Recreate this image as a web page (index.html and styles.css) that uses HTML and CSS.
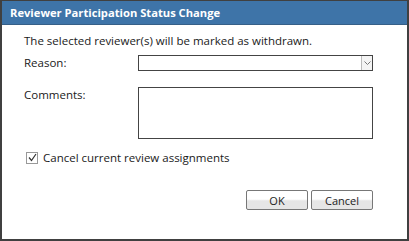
FILE: index.html
```html
<!DOCTYPE html>
<html>
<head>
  <title>Reviewer Participation Status Change</title>
  <link rel="stylesheet" href="styles.css">
</head>
<body>
  <div class="dialog">
    <div class="title-bar">Reviewer Participation Status Change</div>
    <div class="dialog-body">
      <p class="message">The selected reviewer(s) will be marked as withdrawn.</p>
      <div class="form-row">
        <label class="field-label">Reason:</label>
        <div class="select-box">
          <span class="select-arrow">
            <svg width="7" height="5" viewBox="0 0 7 5"><path d="M0.5 0.5 L3.5 3.5 L6.5 0.5" fill="none" stroke="#777" stroke-width="1"/></svg>
          </span>
        </div>
      </div>
      <div class="form-row comments-row">
        <label class="field-label">Comments:</label>
        <div class="textarea-box"></div>
      </div>
      <div class="check-row">
        <span class="checkbox">
          <svg width="9" height="9" viewBox="0 0 9 9"><path d="M1 4.5 L3.5 7.5 L8 1" fill="none" stroke="#333" stroke-width="1.2"/></svg>
        </span>
        <span class="check-label">Cancel current review assignments</span>
      </div>
      <div class="button-row">
        <button class="btn">OK</button>
        <button class="btn">Cancel</button>
      </div>
    </div>
  </div>
</body>
</html>
```

FILE: styles.css
```css
body {
  margin: 0;
  font-family: "Open Sans", sans-serif;
  background-color: #fff;
}

.dialog {
  width: 409px;
  height: 241px;
  box-sizing: border-box;
  border: 2px solid #404040;
  border-top: 1px solid #404040;
  background-color: #fff;
}

.title-bar {
  height: 23px;
  line-height: 23px;
  padding-left: 8px;
  background-color: #3e74a8;
  border-bottom: 1px solid #365f87;
  color: #fff;
  font-weight: bold;
  font-size: 11.2px;
}

.dialog-body {
  padding: 0 34px 0 22px;
  font-size: 11.5px;
  color: #1a1a1a;
}

.message {
  margin: 0;
  padding-top: 8px;
  height: 22px;
  line-height: 16px;
}

.form-row {
  display: grid;
  grid-template-columns: 114px 1fr;
  align-items: start;
}

.field-label {
  line-height: 16px;
}

.select-box {
  height: 14px;
  border: 1px solid #444;
  display: flex;
  justify-content: flex-end;
}

.select-arrow {
  width: 10px;
  border-left: 1px solid #bbb;
  background-color: #f4f4f4;
  display: flex;
  align-items: center;
  justify-content: center;
}

.comments-row {
  margin-top: 16px;
}

.textarea-box {
  height: 50px;
  border: 1px solid #444;
}

.check-row {
  display: flex;
  align-items: center;
  gap: 5px;
  margin-top: 11px;
  margin-left: 2px;
}

.checkbox {
  width: 12px;
  height: 12px;
  box-sizing: border-box;
  border: 1px solid #999;
  display: flex;
  align-items: center;
  justify-content: center;
}

.button-row {
  display: flex;
  justify-content: flex-end;
  gap: 3px;
  margin-top: 25px;
}

.btn {
  width: 62px;
  height: 20px;
  border: 1px solid #777;
  border-radius: 2px;
  background: linear-gradient(#fff 0%, #fff 45%, #e6e6e6 55%, #e6e6e6 100%);
  font-family: "Open Sans", sans-serif;
  font-size: 11px;
  color: #222;
  padding: 0;
}
```
